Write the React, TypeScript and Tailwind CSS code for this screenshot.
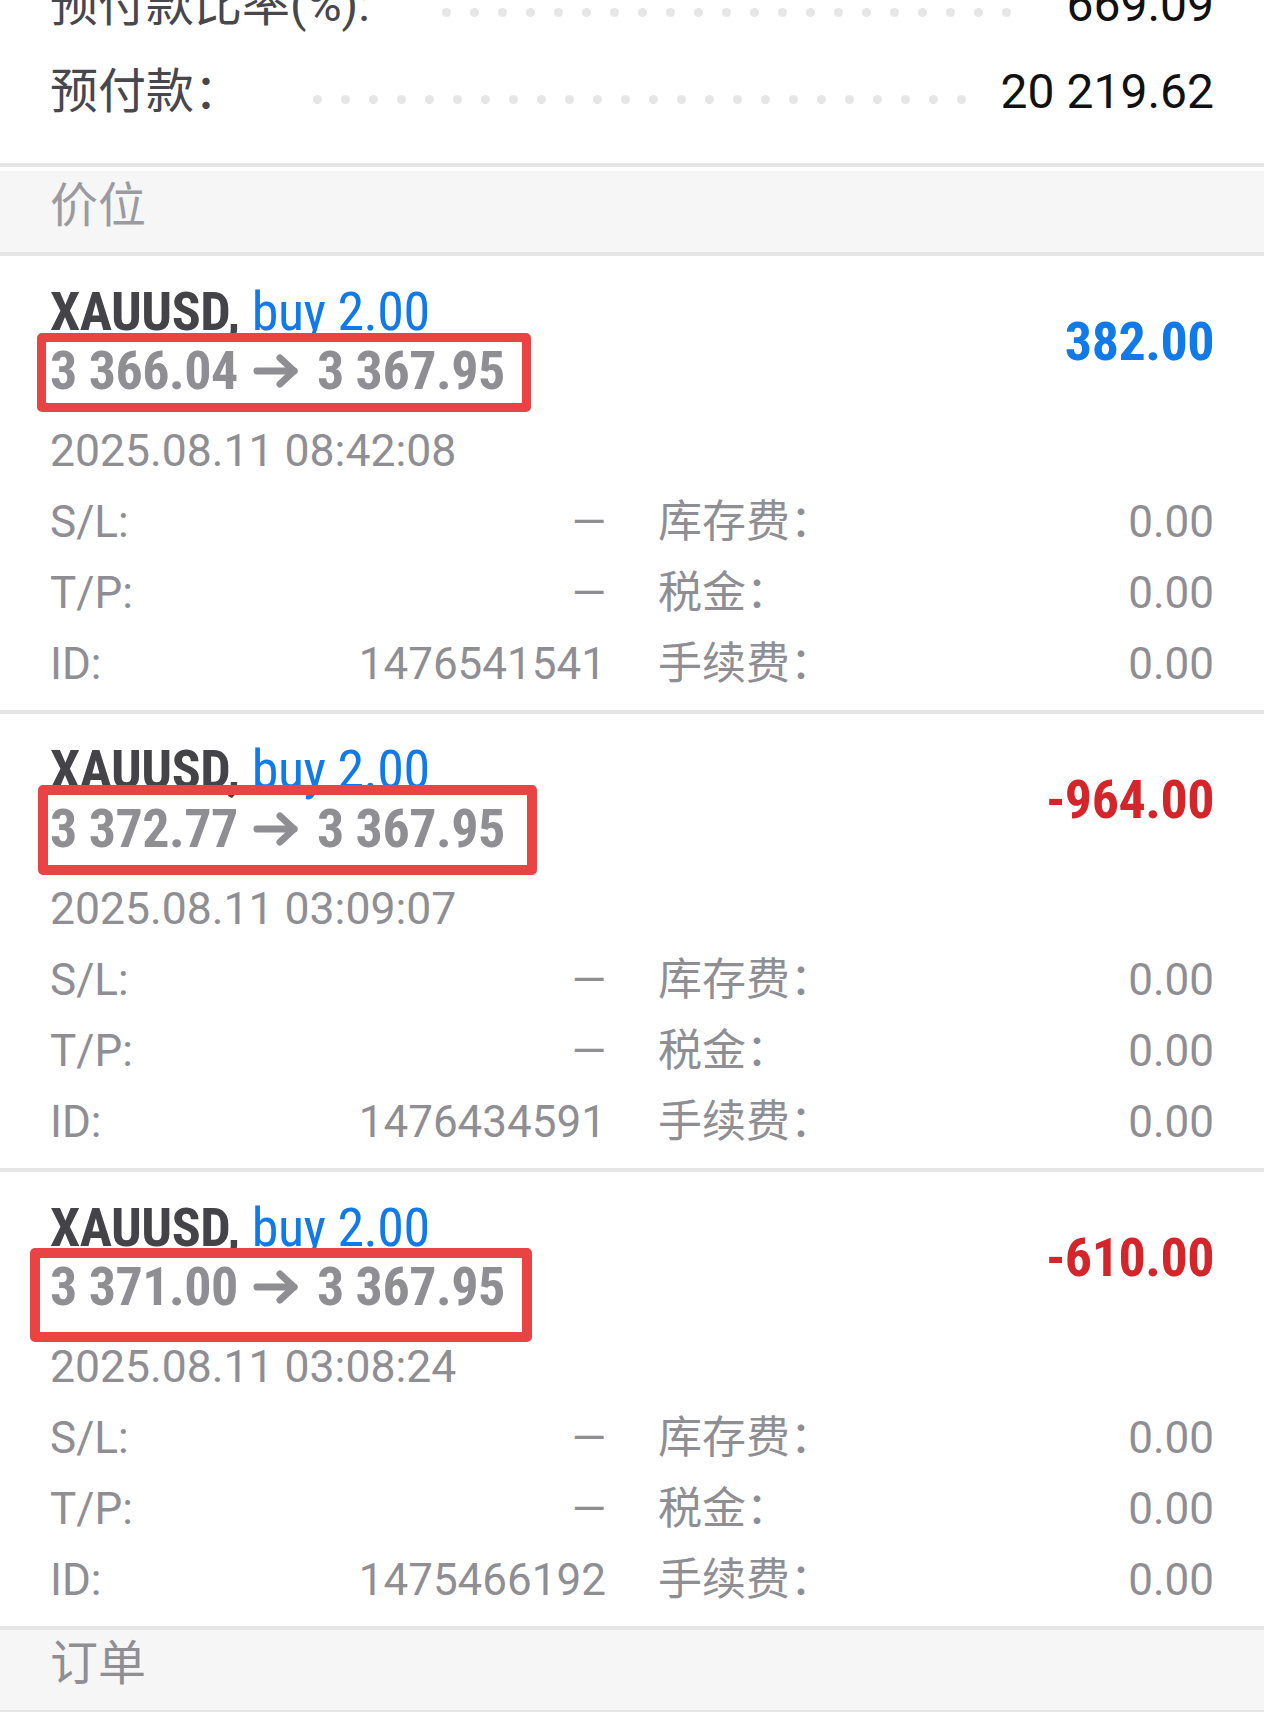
import React from "react";

type Card = {
  open: string;
  profit: string;
  negative: boolean;
  date: string;
  id: string;
  boxClass: string;
};

const cards: Card[] = [
  {
    open: "3 366.04",
    profit: "382.00",
    negative: false,
    date: "2025.08.11 08:42:08",
    id: "1476541541",
    boxClass: "left-[37px] top-[77px] w-[494px] h-[79px] border-[9px]",
  },
  {
    open: "3 372.77",
    profit: "-964.00",
    negative: true,
    date: "2025.08.11 03:09:07",
    id: "1476434591",
    boxClass: "left-[38px] top-[71px] w-[499px] h-[90px] border-[10px]",
  },
  {
    open: "3 371.00",
    profit: "-610.00",
    negative: true,
    date: "2025.08.11 03:08:24",
    id: "1475466192",
    boxClass: "left-[30px] top-[76px] w-[502px] h-[94px] border-[10px]",
  },
];

const COND =
  "font-['Roboto_Condensed','Liberation_Sans_Narrow','Roboto','Noto_Sans_CJK_SC',sans-serif] font-stretch-condensed tracking-[-0.5px]";

function Dots({ count }: { count: number }) {
  return (
    <div className="flex gap-[19px] translate-y-[8px]">
      {Array.from({ length: count }).map((_, i) => (
        <span key={i} className="block w-[9px] h-[9px] rounded-full bg-[#e6e6e6]" />
      ))}
    </div>
  );
}

function Arrow() {
  return (
    <svg
      width="47"
      height="34"
      viewBox="0 0 47 34"
      className="ml-[15px] mr-[17px] shrink-0"
      fill="none"
      stroke="#8e8e93"
      strokeWidth="7"
      strokeLinecap="round"
      strokeLinejoin="round"
    >
      <path d="M4 17 H41" />
      <path d="M27 4 L41 17 L27 30" />
    </svg>
  );
}

function DetailRow({
  label,
  value,
  label2,
  value2,
}: {
  label: string;
  value: string;
  label2: string;
  value2: string;
}) {
  return (
    <>
      <div className="flex justify-between h-[71px] leading-[71px]">
        <span>{label}</span>
        <span>{value}</span>
      </div>
      <div className="flex justify-between h-[71px] leading-[71px]">
        <span>{label2}</span>
        <span>{value2}</span>
      </div>
    </>
  );
}

function PositionCard({ card }: { card: Card }) {
  return (
    <div className="relative h-[458px] border-b-4 border-[#e6e6e6] px-[50px] pt-[26px]">
      <div className="flex items-center justify-between">
        <div className={COND}>
          <div className="h-[59px] leading-[59px] text-[54px] font-bold text-[#434348] whitespace-nowrap">
            XAUUSD, <span className="font-normal text-[#0f7ae8]">buy 2.00</span>
          </div>
          <div className="flex items-center h-[59px] leading-[59px] text-[54px] font-bold text-[#8e8e93] whitespace-nowrap">
            <span>{card.open}</span>
            <Arrow />
            <span>3 367.95</span>
          </div>
        </div>
        <div
          className={`${COND} text-[54px] font-bold leading-[59px] ${
            card.negative ? "text-[#d4252b]" : "text-[#0f7ae8]"
          }`}
        >
          {card.profit}
        </div>
      </div>
      <div className="mt-[16px] h-[71px] leading-[71px] text-[44.5px] text-[#8e8e93]">{card.date}</div>
      <div className="grid grid-cols-2 gap-x-[52px] text-[44px] text-[#8e8e93]">
        <DetailRow label="S/L:" value="—" label2="库存费：" value2="0.00" />
        <DetailRow label="T/P:" value="—" label2="税金：" value2="0.00" />
        <DetailRow label="ID:" value={card.id} label2="手续费：" value2="0.00" />
      </div>
      <div className={`absolute rounded-[5px] border-[#e94343] pointer-events-none ${card.boxClass}`} />
    </div>
  );
}

export default function App() {
  return (
    <div className="w-[1264px] h-[1712px] overflow-hidden bg-white font-['Roboto','Noto_Sans_CJK_SC',sans-serif]">
      <div className="-mt-[39px] pb-[28px] border-b-4 border-[#e6e6e6]">
        <div className="flex items-center h-[87px] px-[50px] text-[48px] leading-[87px]">
          <span className="w-[392px] text-[#47474c] whitespace-nowrap">预付款比率(%):</span>
          <Dots count={21} />
          <span className="ml-auto text-[#111111]">669.09</span>
        </div>
        <div className="flex items-center h-[87px] px-[50px] text-[48px] leading-[87px]">
          <span className="w-[263px] text-[#47474c] whitespace-nowrap">预付款：</span>
          <Dots count={24} />
          <span className="ml-auto text-[#111111]">20 219.62</span>
        </div>
      </div>
      <div className="mt-[4px] h-[85px] border-b-4 border-[#e6e6e6] bg-[#f6f6f6] flex items-center px-[50px] pb-[12px] text-[48px] text-[#9b9b9f]">
        价位
      </div>
      {cards.map((c, i) => (
        <PositionCard key={i} card={c} />
      ))}
      <div className="h-[84px] border-b-4 border-[#e6e6e6] bg-[#f6f6f6] flex items-center px-[50px] pb-[12px] text-[48px] text-[#8e8e93]">
        订单
      </div>
    </div>
  );
}
